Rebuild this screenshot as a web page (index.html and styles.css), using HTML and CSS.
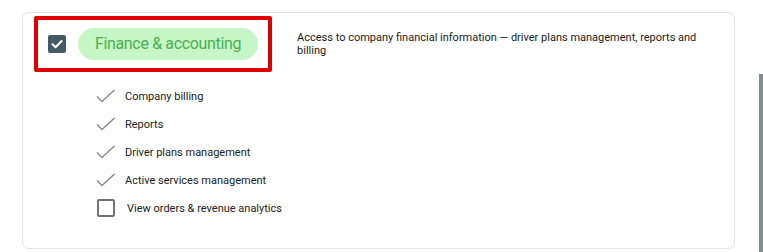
FILE: index.html
```html
<!DOCTYPE html>
<html lang="en">
<head>
  <meta charset="UTF-8">
  <title>Role permissions</title>
  <link rel="stylesheet" href="styles.css">
</head>
<body>

  <!-- Permission group card -->
  <div class="card">
    <div class="group-row">
      <div class="group-head">
        <span class="checkbox checked">
          <svg width="18" height="18" viewBox="0 0 18 18">
            <polyline points="4.5,9.2 7.6,12.2 13.6,6" fill="none" stroke="#fff" stroke-width="2" stroke-linecap="round" stroke-linejoin="round"/>
          </svg>
        </span>
        <span class="chip">Finance &amp; accounting</span>
      </div>
      <p class="description">Access to company financial information — driver plans management, reports and billing</p>
    </div>

    <ul class="perm-list">
      <li class="perm">
        <svg class="tick" width="20" height="14" viewBox="0 0 20 14">
          <polyline points="1,7.5 6,12.5 18.5,1" fill="none" stroke="#8e8e8e" stroke-width="1.6"/>
        </svg>
        <span>Company billing</span>
      </li>
      <li class="perm">
        <svg class="tick" width="20" height="14" viewBox="0 0 20 14">
          <polyline points="1,7.5 6,12.5 18.5,1" fill="none" stroke="#8e8e8e" stroke-width="1.6"/>
        </svg>
        <span>Reports</span>
      </li>
      <li class="perm">
        <svg class="tick" width="20" height="14" viewBox="0 0 20 14">
          <polyline points="1,7.5 6,12.5 18.5,1" fill="none" stroke="#8e8e8e" stroke-width="1.6"/>
        </svg>
        <span>Driver plans management</span>
      </li>
      <li class="perm">
        <svg class="tick" width="20" height="14" viewBox="0 0 20 14">
          <polyline points="1,7.5 6,12.5 18.5,1" fill="none" stroke="#8e8e8e" stroke-width="1.6"/>
        </svg>
        <span>Active services management</span>
      </li>
      <li class="perm">
        <span class="checkbox empty"></span>
        <span>View orders &amp; revenue analytics</span>
      </li>
    </ul>
  </div>

  <!-- Scrollbar thumb -->
  <div class="scroll-thumb"></div>

</body>
</html>
```

FILE: styles.css
```css
/* General body styling */
body {
  margin: 0;
  font-family: Roboto, "Liberation Sans", Arial, sans-serif;
  background-color: #fff;
  color: #212121;
}

/* Card */
.card {
  margin: 12px 0 0 22px;
  width: 713px;
  height: 237px;
  box-sizing: border-box;
  border: 1px solid #e3e3e3;
  border-radius: 7px;
  padding: 3px 0 0 11px;
}

.group-row {
  display: flex;
  align-items: flex-start;
}

/* Highlighted group header */
.group-head {
  display: flex;
  align-items: center;
  gap: 12px;
  padding: 8px 10px 8px 10px;
  border: 4px solid #e00000;
  border-radius: 2px;
}

.checkbox {
  display: inline-block;
  width: 18px;
  height: 18px;
  box-sizing: border-box;
  border-radius: 2px;
  flex-shrink: 0;
}

.checkbox.checked {
  background-color: #455a64;
}

.checkbox svg {
  display: block;
}

.checkbox.empty {
  border: 2px solid #737373;
  margin-left: 1px;
}

.chip {
  display: inline-block;
  height: 32px;
  line-height: 32px;
  padding: 0 17px;
  border-radius: 16px;
  background-color: #c6f6c6;
  color: #4caf50;
  font-size: 16px;
  letter-spacing: -0.35px;
}

.description {
  margin: 15px 0 0 25px;
  width: 415px;
  font-size: 11px;
  line-height: 13px;
  color: #212121;
}

/* Permissions list */
.perm-list {
  list-style: none;
  margin: 10px 0 0 0;
  padding: 0 0 0 62px;
}

.perm {
  display: flex;
  align-items: center;
  height: 28px;
  font-size: 11px;
  color: #212121;
}

.perm .tick {
  margin-right: 9px;
  flex-shrink: 0;
}

.perm .checkbox.empty {
  margin-right: 12px;
}

/* Scrollbar */
.scroll-thumb {
  position: fixed;
  right: 0;
  top: 74px;
  bottom: 0;
  width: 4px;
  background-color: #7d8e94;
}
```
